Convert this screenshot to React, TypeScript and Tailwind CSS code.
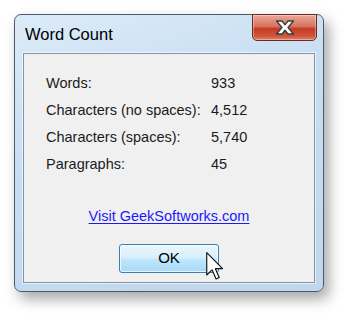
import React from 'react';

const rows: [string, string][] = [
  ['Words:', '933'],
  ['Characters (no spaces):', '4,512'],
  ['Characters (spaces):', '5,740'],
  ['Paragraphs:', '45'],
];

function CloseButton() {
  return (
    <button className="w-[65px] h-[27px] mr-[6px] -mt-px flex items-center justify-center rounded-b-[5px] border border-[#6b2a1e] bg-[linear-gradient(to_bottom,#e9a899_0%,#d8735f_45%,#c23c22_55%,#d0553c_85%,#e0876f_100%)] shadow-[inset_0_0_0_1px_rgba(255,255,255,0.35)]">
      <svg width="22" height="15" viewBox="0 0 22 15">
        <path d="M2.5 1 L8 1 L11 4.8 L14 1 L19.5 1 L14 7.5 L19.5 14 L14 14 L11 10.2 L8 14 L2.5 14 L8 7.5 Z" fill="#ffffff" stroke="#3b3b3b" strokeWidth="1.3" strokeLinejoin="round" />
      </svg>
    </button>
  );
}

function Cursor() {
  return (
    <svg className="absolute left-[205px] top-[252px]" width="20" height="28" viewBox="0 0 12.5 19.5">
      <path d="M0.5 0.5 L0.5 16 L4.2 12.4 L7 18.8 L9.2 17.8 L6.5 11.6 L11.5 11.6 Z" fill="#ffffff" stroke="#111111" strokeWidth="0.8" strokeLinejoin="round" />
    </svg>
  );
}

export default function App() {
  return (
    <div className="relative w-[350px] h-[316px] bg-white pt-[14px] pl-[14px] font-['Liberation_Sans',Arial,sans-serif] text-[#1b1b1b]">
      <div className="w-[310px] h-[278px] flex flex-col rounded-[7px] border border-[#505a66] bg-[linear-gradient(160deg,#dcebf8_0%,#c8def3_40%,#bfd6ee_100%)] shadow-[5px_7px_14px_rgba(0,0,0,0.35)]">
        <div className="h-[38px] flex items-start justify-between">
          <div className="pl-[10px] pt-[10px] text-[16.5px] leading-[18px] text-black">Word Count</div>
          <CloseButton />
        </div>
        <div className="flex-1 mx-[8px] mb-[8px] border border-[#8494a8] bg-[#f0f0f0] shadow-[0_0_0_1px_rgba(255,255,255,0.6)] flex flex-col items-center">
          <div className="w-full pl-[22px] pt-[16px] flex flex-col">
            {rows.map(([label, value]) => (
              <div key={label} className="h-[27px] flex items-center text-[14.5px]">
                <span className="w-[165px]">{label}</span>
                <span>{value}</span>
              </div>
            ))}
          </div>
          <a href="#" className="mt-[29px] h-[20px] flex items-center text-[14.5px] text-[#1a1aff] underline underline-offset-2">
            Visit GeekSoftworks.com
          </a>
          <button className="mt-[17px] w-[100px] h-[29px] rounded-[3px] border border-[#3c7fb1] bg-[linear-gradient(to_bottom,#eaf6fd_0%,#d9f0fc_45%,#bee6fd_55%,#a7d9f5_100%)] shadow-[inset_0_0_0_1px_rgba(255,255,255,0.7)] text-[15px] text-black">
            OK
          </button>
        </div>
      </div>
      <Cursor />
    </div>
  );
}
